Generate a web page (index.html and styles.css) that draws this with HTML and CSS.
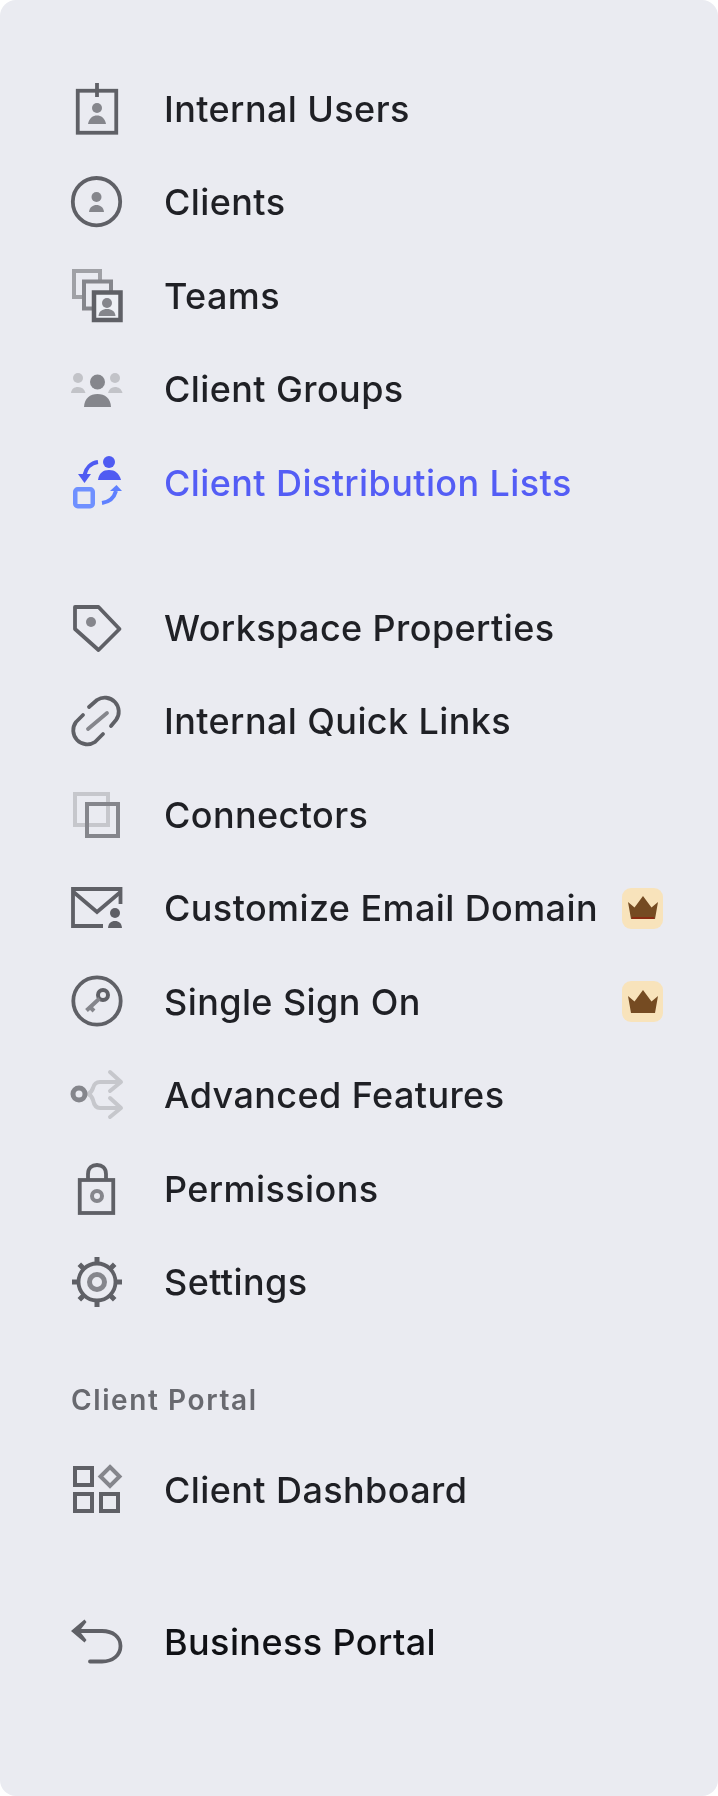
FILE: index.html
```html
<!DOCTYPE html>
<html lang="en">
<head>
<meta charset="utf-8">
<title>Settings menu</title>
<link rel="stylesheet" href="styles.css">
</head>
<body>
<nav class="panel">
 <div class="content">
  <ul class="group">
    <li class="row">
      <svg class="icon" viewBox="69 81 56 56"><rect class="dark" x="77.750" y="90.750" width="38.500" height="42"/><path class="dark" d="M97 83v14"/><circle class="fill-mid" cx="97" cy="108" r="5"/><path class="fill-mid" d="M88 124c1-6 5-8.500 9-8.500s8 2.500 9 8.500z"/></svg>
      <span class="label">Internal Users</span>
    </li>
    <li class="row">
      <svg class="icon" viewBox="69 174 56 56"><circle class="dark" cx="96.500" cy="201.700" r="23.700"/><circle class="fill-mid" cx="96.500" cy="197" r="5"/><path class="fill-mid" d="M89 212c.500-5 4-7 7.500-7s7 2 7.500 7z"/></svg>
      <span class="label">Clients</span>
    </li>
    <li class="row">
      <svg class="icon" viewBox="69 268 56 56"><rect class="light-solid" x="74" y="271" width="26" height="26"/><rect class="mid-box" x="84" y="281.500" width="27" height="27"/><rect class="dark-box" x="94" y="292.500" width="26.500" height="27.500"/><circle class="fill-mid" cx="107" cy="303" r="5"/><path class="fill-mid" d="M98.500 316c.500-5 4-7 8.500-7s8 2 8.500 7z"/></svg>
      <span class="label">Teams</span>
    </li>
    <li class="row">
      <svg class="icon" viewBox="69 361 56 56"><circle class="fill-light" cx="78" cy="378" r="5"/><path class="fill-light" d="M71 393c.500-4 3-6 7-6s6.500 2 7.500 6z"/><circle class="fill-light" cx="115" cy="378" r="5"/><path class="fill-light" d="M108 393c1-4 3.500-6 7-6s6.500 2 7.500 6z"/><circle class="fill-mid" cx="97.500" cy="382" r="7.500"/><path class="fill-mid" d="M84 407c.500-9 6-13 13.500-13s13 4 13.500 13z"/></svg>
      <span class="label">Client Groups</span>
    </li>
    <li class="row row-active">
      <svg class="icon" viewBox="69 455 56 56"><circle class="fill-blue" cx="109" cy="462" r="6"/><path class="fill-blue" d="M98 480c1-7 5-10 11-10s10 3 12 10z"/><path class="blue" d="M98 462c-7 1-12 6-13.500 13"/><path class="fill-blue" d="M78 474h13l-6.500 9z"/><rect class="sky" x="75.250" y="489.250" width="17.500" height="17" rx="2.500"/><path class="sky2" d="M102 503c7-1 12-5 14-12"/><path class="fill-sky" d="M110 491l6.500-6 5.500 6z"/></svg>
      <span class="label">Client Distribution Lists</span>
    </li>
  </ul>
  <ul class="group">
    <li class="row">
      <svg class="icon" viewBox="69 600 56 56"><path class="dark join" d="M75 607h23.500l21 22-21 21-23.500-21z"/><circle class="fill-mid" cx="91" cy="622" r="5"/></svg>
      <span class="label">Workspace Properties</span>
    </li>
    <li class="row">
      <svg class="icon" viewBox="69 693 56 56"><path class="dark round" d="M89 707l8-7a14 14 0 0 1 19 20l-5 6"/><path class="dark round" d="M83 715l-7 7a14 14 0 0 0 19 20l8-8"/><path class="mid round" d="M88 729l19-16"/></svg>
      <span class="label">Internal Quick Links</span>
    </li>
    <li class="row">
      <svg class="icon" viewBox="69 787 56 56"><rect class="pale" x="75" y="794" width="33" height="31"/><rect class="mid-wide" x="87" y="804" width="31" height="32"/></svg>
      <span class="label">Connectors</span>
    </li>
    <li class="row">
      <svg class="icon" viewBox="69 880 56 56"><path class="dark" d="M103 926H73V889h47.500v15"/><path class="dark" d="M73.500 892L97 912l23.500-20"/><circle class="fill-dark" cx="115" cy="913" r="5"/><path class="fill-dark" d="M108 928c.500-5 3-7 7-7s6.500 2 7 7z"/></svg>
      <span class="label label-wide">Customize Email Domain</span>
      <span class="badge"><svg class="crown" viewBox="0 0 32 26"><path class="crown-fill" d="M1 7l6.500 5.500L16 1l8.500 11.500L31 7l-3 17H4z"/><path class="crown-line" d="M5 23h22"/></svg></span>
    </li>
    <li class="row">
      <svg class="icon" viewBox="69 974 56 56"><circle class="dark" cx="97" cy="1001" r="23.700"/><circle class="dark-wide" cx="103" cy="995" r="5"/><path class="mid-wide" d="M99.500 998.500l-13 12M90 1007l4 4"/></svg>
      <span class="label">Single Sign On</span>
      <span class="badge"><svg class="crown" viewBox="0 0 32 26"><path class="crown-fill" d="M1 7l6.500 5.500L16 1l8.500 11.500L31 7l-3 17H4z"/></svg></span>
    </li>
    <li class="row">
      <svg class="icon" viewBox="69 1067 56 56"><path class="pale round" d="M88 1094c3-1 4-3 5-6 1-4 3-6 7-6h20M88 1094c3 1 4 3 5 6 1 5 3 8 7 8h20M110 1072l11 10-11 9M110 1098l11 10-11 9"/><circle class="mid-thick" cx="79" cy="1094" r="6"/></svg>
      <span class="label">Advanced Features</span>
    </li>
    <li class="row">
      <svg class="icon" viewBox="69 1161 56 56"><rect class="dark" x="79.750" y="1180" width="33.500" height="33"/><path class="dark" d="M88 1180v-6c0-6 4-9 9-9s9 3 9 9v6"/><circle class="mid-wide" cx="97" cy="1196" r="5"/></svg>
      <span class="label">Permissions</span>
    </li>
    <li class="row">
      <svg class="icon" viewBox="69 1254 56 56"><circle class="dark" cx="97" cy="1282" r="18.500"/><path class="dark-teeth" d="M97 1257v6M97 1301v6M72 1282h6M116 1282h6M79.300 1264.300l4.500 4.500M110.200 1295.200l4.500 4.500M114.700 1264.300l-4.500 4.500M83.800 1295.200l-4.500 4.500"/><circle class="mid-thick" cx="97" cy="1282" r="7.500"/></svg>
      <span class="label">Settings</span>
    </li>
  </ul>
  <h2 class="section">Client Portal</h2>
  <ul class="group group-tight">
    <li class="row">
      <svg class="icon" viewBox="69 1462 56 56"><rect class="dark-wide" x="75" y="1468" width="17" height="17"/><rect class="dark-wide" x="75" y="1494" width="17" height="17"/><rect class="dark-wide" x="101" y="1494" width="17" height="17"/><path class="mid-wide" d="M110 1467l9.500 9.500-9.500 9.500-9.500-9.500z"/></svg>
      <span class="label">Client Dashboard</span>
    </li>
  </ul>
  <ul class="group group-last">
    <li class="row">
      <svg class="icon" viewBox="69 1615 56 56"><path class="dark round" d="M75 1632h27c11 0 18.500 6 18.500 15s-7.500 15.500-18.500 15.500H90"/><path class="fill-dark" d="M71 1632l13.500-11.500 2 2.500-7 9 7 9-2 2.500z"/></svg>
      <span class="label label-strong">Business Portal</span>
    </li>
  </ul>
 </div>
</nav>
</body>
</html>
```
FILE: styles.css
```css
* {
  box-sizing: border-box;
}

html,
body {
  margin: 0;
  padding: 0;
  background: #ffffff;
}

body {
  font-family: Inter, "Liberation Sans", sans-serif;
}

.panel {
  width: 718px;
  height: 1796px;
  background: #eaebf1;
  border-radius: 16px;
}

.content {
  padding: 62px 0 0 69px;
  filter: blur(0.55px);
}

.group {
  list-style: none;
  margin: 0 0 51.5px;
  padding: 0;
}

.group-tight {
  margin-bottom: 59px;
}

.group-last {
  margin-bottom: 0;
}

.row {
  display: flex;
  align-items: center;
  height: 93.5px;
}

.icon {
  flex: none;
  width: 56px;
  height: 56px;
  margin-right: 39px;
  fill: none;
  stroke-width: 3.8;
}

.label {
  font-size: 36px;
  font-weight: 500;
  letter-spacing: 0.4px;
  color: #1f2025;
  white-space: nowrap;
}

.row-active .label {
  color: #545df5;
}

.label-strong {
  color: #101115;
}

.section {
  margin: 0 0 0 2px;
  padding-top: 4.5px;
  height: 62.5px;
  font-size: 28px;
  line-height: 30px;
  font-weight: 600;
  letter-spacing: 1.6px;
  color: #68696f;
}

.badge {
  position: absolute;
  left: 622px;
  display: flex;
  align-items: center;
  justify-content: center;
  width: 41px;
  height: 41px;
  border-radius: 9px;
  background: #f8e3bb;
}

.crown {
  width: 32px;
  height: 26px;
}

.crown-fill {
  fill: #754b22;
}

.crown-line {
  fill: none;
  stroke: #8a2c12;
  stroke-width: 2;
}

.dark,
.dark-wide,
.dark-box,
.dark-teeth {
  stroke: #5f6066;
}

.dark-wide {
  stroke-width: 4;
}

.dark-box {
  stroke-width: 4.500;
  fill: #eef0f5;
}

.dark-teeth {
  stroke-width: 5;
}

.mid,
.mid-wide,
.mid-thick,
.mid-box {
  stroke: #85868c;
}

.mid-wide {
  stroke-width: 4;
}

.mid-thick {
  stroke-width: 5;
}

.mid-box {
  stroke-width: 4;
  fill: #eaebf1;
}

.light-solid {
  stroke: #a0a1a6;
  stroke-width: 4;
  fill: #eaebf1;
}

.pale {
  stroke: #c6c7cc;
  stroke-width: 4;
}

.round {
  stroke-linecap: round;
  stroke-linejoin: round;
}

.join {
  stroke-linejoin: round;
}

.fill-dark {
  fill: #5f6066;
}

.fill-mid {
  fill: #85868c;
}

.fill-light {
  fill: #c2c3c8;
}

.fill-blue {
  fill: #4f5bf2;
}

.fill-sky {
  fill: #5f80ff;
}

.blue {
  stroke: #4f5bf2;
  stroke-width: 4;
}

.sky {
  stroke: #6f90ff;
  stroke-width: 4.500;
}

.sky2 {
  stroke: #5f80ff;
  stroke-width: 4;
}
```
